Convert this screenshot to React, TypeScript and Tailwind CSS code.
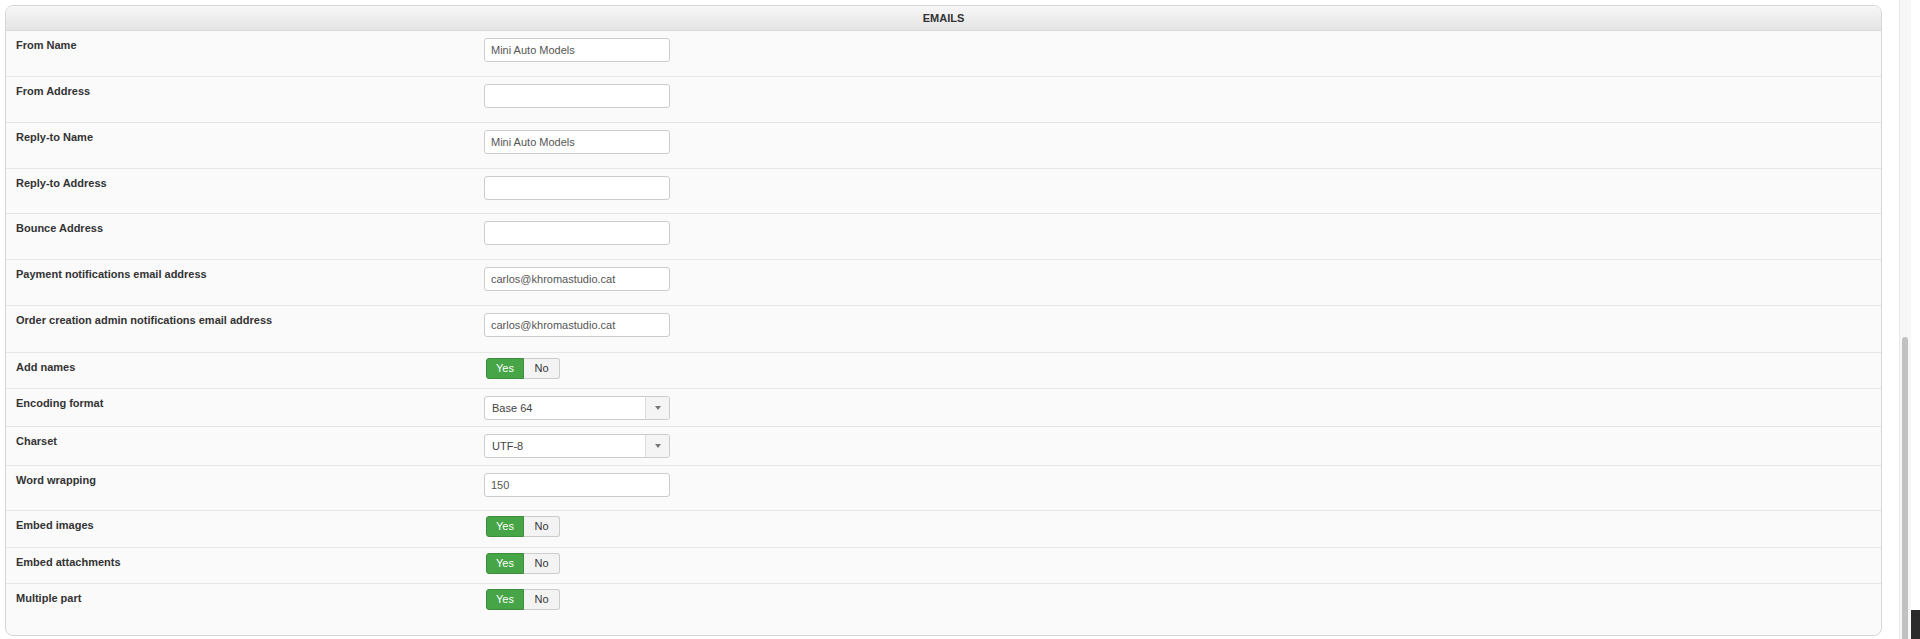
import { useState } from 'react'

type Row = {
  label: string
  h: string
  kind: 'text' | 'toggle' | 'select'
  value?: string
}

const rows: Row[] = [
  { label: 'From Name', h: 'h-[46px]', kind: 'text', value: 'Mini Auto Models' },
  { label: 'From Address', h: 'h-[46px]', kind: 'text', value: '' },
  { label: 'Reply-to Name', h: 'h-[46px]', kind: 'text', value: 'Mini Auto Models' },
  { label: 'Reply-to Address', h: 'h-[45px]', kind: 'text', value: '' },
  { label: 'Bounce Address', h: 'h-[46px]', kind: 'text', value: '' },
  { label: 'Payment notifications email address', h: 'h-[46px]', kind: 'text', value: 'carlos@khromastudio.cat' },
  { label: 'Order creation admin notifications email address', h: 'h-[47px]', kind: 'text', value: 'carlos@khromastudio.cat' },
  { label: 'Add names', h: 'h-[36px]', kind: 'toggle' },
  { label: 'Encoding format', h: 'h-[38px]', kind: 'select', value: 'Base 64' },
  { label: 'Charset', h: 'h-[39px]', kind: 'select', value: 'UTF-8' },
  { label: 'Word wrapping', h: 'h-[45px]', kind: 'text', value: '150' },
  { label: 'Embed images', h: 'h-[37px]', kind: 'toggle' },
  { label: 'Embed attachments', h: 'h-[36px]', kind: 'toggle' },
  { label: 'Multiple part', h: 'h-[51px]', kind: 'toggle' },
]

function TextInput({ value }: { value: string }) {
  const [v, setV] = useState(value)
  return (
    <input
      type="text"
      value={v}
      onChange={(e) => setV(e.target.value)}
      className="mt-[7px] h-[24px] w-[186px] rounded-[3px] border border-[#cccccc] bg-white px-[6px] text-[11px] text-[#555555] outline-none"
    />
  )
}

function Toggle() {
  const [on, setOn] = useState(true)
  return (
    <div className="ml-[2px] mt-[5px] flex h-[21px] text-[11px]">
      <button
        onClick={() => setOn(true)}
        className={
          on
            ? 'w-[38px] rounded-l-[3px] border border-[#3b8d3b] bg-[#46a546] text-white'
            : 'w-[38px] rounded-l-[3px] border border-[#cccccc] bg-[#f3f3f3] text-[#333333]'
        }
      >
        Yes
      </button>
      <button
        onClick={() => setOn(false)}
        className={
          !on
            ? 'w-[36px] rounded-r-[3px] border border-l-0 border-[#b52b27] bg-[#bd362f] text-white'
            : 'w-[36px] rounded-r-[3px] border border-l-0 border-[#cccccc] bg-[#f3f3f3] text-[#333333]'
        }
      >
        No
      </button>
    </div>
  )
}

function Select({ value }: { value: string }) {
  return (
    <div className="mt-[7px] flex h-[24px] w-[186px] rounded-[3px] border border-[#cccccc] bg-white text-[11px] text-[#444444]">
      <div className="flex flex-1 items-center pl-[7px]">{value}</div>
      <div className="flex w-[24px] items-center justify-center rounded-r-[3px] border-l border-[#dddddd] bg-[#f4f4f4]">
        <div className="h-0 w-0 border-x-[3px] border-t-[4px] border-x-transparent border-t-[#777777]" />
      </div>
    </div>
  )
}

export default function App() {
  return (
    <div
      className="flex h-[639px] w-[1920px] overflow-hidden bg-white text-[#333333]"
      style={{ fontFamily: '"Liberation Sans", Arial, sans-serif' }}
    >
      <div className="flex-1 pl-[5px] pr-[17px] pt-[5px]">
        <div className="overflow-hidden rounded-[8px] border border-[#d6d6d6] bg-[#fafafa]">
          <div className="flex h-[25px] items-center justify-center border-b border-[#dcdcdc] bg-gradient-to-b from-[#f7f7f7] to-[#e4e4e4] text-[11px] font-bold">
            EMAILS
          </div>
          {rows.map((r, i) => (
            <div
              key={r.label}
              className={`flex ${r.h} ${i < rows.length - 1 ? 'border-b border-[#e6e6e6]' : ''}`}
            >
              <div className="w-[478px] pl-[10px] pt-[6px] text-[11px] font-bold leading-[17px]">
                {r.label}
              </div>
              <div>
                {r.kind === 'text' && <TextInput value={r.value ?? ''} />}
                {r.kind === 'toggle' && <Toggle />}
                {r.kind === 'select' && <Select value={r.value ?? ''} />}
              </div>
            </div>
          ))}
        </div>
      </div>
      <div className="flex w-[12px] flex-col border-l border-[#e8e8e8] bg-[#f7f7f7] pl-[2px] pr-[3px] pt-[337px]">
        <div className="flex-1 rounded-t-[4px] bg-[#c1c1c1]" />
      </div>
      <div className="flex w-[9px] flex-col justify-end">
        <div className="h-[29px] bg-[#2b2b2b]" />
      </div>
    </div>
  )
}
